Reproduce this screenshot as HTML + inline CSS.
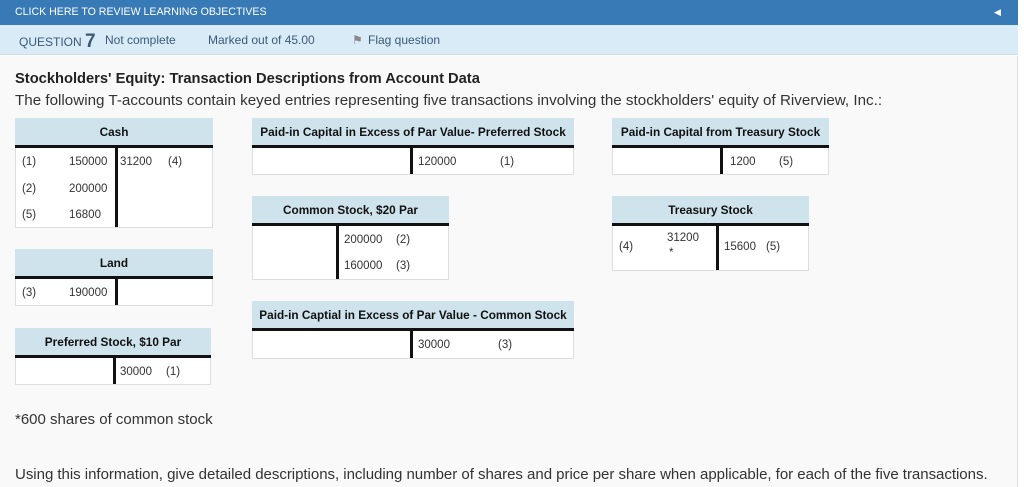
<!DOCTYPE html>
<html><head><meta charset="utf-8"><style>
*{margin:0;padding:0;box-sizing:border-box}
body{width:1024px;height:487px;overflow:hidden;background:#fff;font-family:"Liberation Sans",sans-serif;color:#333;position:relative}
.top{position:absolute;left:0;top:0;width:1018px;height:25px;background:#377ab5;color:#fff;font-size:10.6px;line-height:24px;padding-left:15px}
.bar{position:absolute;left:0;top:25px;width:1018px;height:30px;background:#d9ebf6;border-bottom:1px solid #cfdde6;font-size:12px;line-height:31px;color:#3a5a78}
.main{position:absolute;left:0;top:56px;width:1018px;height:431px;background:#f9f9f9;border-right:1px solid #ddd}
.a{position:absolute}
.h{position:absolute;left:0;top:0;right:0;background:#cfe3ec;font-weight:bold;font-size:11.8px;text-align:center;color:#111;border-bottom:3px solid #111}
.b{position:absolute;left:0;right:0;background:#fff;border:1px solid #ddd;border-top:none}
.d{position:absolute;top:0;bottom:0;width:3px;background:#111}
.t{position:absolute;font-size:11.5px;color:#333;white-space:nowrap}
</style></head><body>
<div class="top">CLICK HERE TO REVIEW LEARNING OBJECTIVES<span style="position:absolute;left:994px;top:0;font-size:9px">◀</span></div>
<div class="bar"><span style="position:absolute;left:19px">QUESTION <b style="font-size:19px;color:#3a5a78;position:relative;top:1px">7</b></span><span style="position:absolute;left:105px">Not complete</span><span style="position:absolute;left:208px">Marked out of 45.00</span><span style="position:absolute;left:352px;color:#888">⚑</span><span style="position:absolute;left:368px">Flag question</span></div>
<div class="main"></div>
<div class="t" style="left:15px;top:71px;font-size:14.7px;font-weight:bold;color:#222">Stockholders' Equity: Transaction Descriptions from Account Data</div>
<div class="t" style="left:15px;top:92px;font-size:15.2px;color:#333">The following T-accounts contain keyed entries representing five transactions involving the stockholders' equity of Riverview, Inc.:</div>

<div class="a" style="left:15px;top:118px;width:198px;height:110px">
<div class="h" style="height:30px;line-height:29px">Cash</div>
<div class="b" style="top:30px;bottom:0"><div class="d" style="left:99px"></div>
<span class="t" style="left:6px;top:8px">(1)</span><span class="t" style="left:53px;top:8px">150000</span><span class="t" style="left:104px;top:8px">31200</span><span class="t" style="left:152px;top:8px">(4)</span>
<span class="t" style="left:6px;top:35px">(2)</span><span class="t" style="left:53px;top:35px">200000</span>
<span class="t" style="left:6px;top:61px">(5)</span><span class="t" style="left:53px;top:61px">16800</span></div></div>

<div class="a" style="left:252px;top:118px;width:322px;height:57px">
<div class="h" style="height:30px;line-height:29px">Paid-in Capital in Excess of Par Value- Preferred Stock</div>
<div class="b" style="top:30px;bottom:0"><div class="d" style="left:157px"></div>
<span class="t" style="left:165px;top:8px">120000</span><span class="t" style="left:247px;top:8px">(1)</span></div></div>

<div class="a" style="left:612px;top:118px;width:217px;height:57px">
<div class="h" style="height:30px;line-height:29px">Paid-in Capital from Treasury Stock</div>
<div class="b" style="top:30px;bottom:0"><div class="d" style="left:107px"></div>
<span class="t" style="left:117px;top:8px">1200</span><span class="t" style="left:166px;top:8px">(5)</span></div></div>

<div class="a" style="left:252px;top:196px;width:197px;height:84px">
<div class="h" style="height:30px;line-height:29px">Common Stock, $20 Par</div>
<div class="b" style="top:30px;bottom:0"><div class="d" style="left:83px"></div>
<span class="t" style="left:91px;top:8px">200000</span><span class="t" style="left:143px;top:8px">(2)</span>
<span class="t" style="left:91px;top:34px">160000</span><span class="t" style="left:143px;top:34px">(3)</span></div></div>

<div class="a" style="left:612px;top:196px;width:197px;height:75px">
<div class="h" style="height:30px;line-height:29px">Treasury Stock</div>
<div class="b" style="top:30px;bottom:0"><div class="d" style="left:103px"></div>
<span class="t" style="left:6px;top:15px">(4)</span><span class="t" style="left:54px;top:6px">31200</span><span class="t" style="left:56px;top:21px">*</span>
<span class="t" style="left:111px;top:15px">15600</span><span class="t" style="left:153px;top:15px">(5)</span></div></div>

<div class="a" style="left:15px;top:249px;width:198px;height:57px">
<div class="h" style="height:30px;line-height:29px">Land</div>
<div class="b" style="top:30px;bottom:0"><div class="d" style="left:99px"></div>
<span class="t" style="left:6px;top:8px">(3)</span><span class="t" style="left:53px;top:8px">190000</span></div></div>

<div class="a" style="left:252px;top:301px;width:322px;height:58px">
<div class="h" style="height:30px;line-height:29px">Paid-in Captial in Excess of Par Value - Common Stock</div>
<div class="b" style="top:30px;bottom:0"><div class="d" style="left:157px"></div>
<span class="t" style="left:165px;top:8px">30000</span><span class="t" style="left:245px;top:8px">(3)</span></div></div>

<div class="a" style="left:15px;top:328px;width:196px;height:57px">
<div class="h" style="height:30px;line-height:29px">Preferred Stock, $10 Par</div>
<div class="b" style="top:30px;bottom:0"><div class="d" style="left:97px"></div>
<span class="t" style="left:104px;top:8px">30000</span><span class="t" style="left:150px;top:8px">(1)</span></div></div>

<div class="t" style="left:15px;top:411px;font-size:15px">*600 shares of common stock</div>
<div class="t" style="left:15px;top:466px;font-size:15.05px;letter-spacing:-0.04px">Using this information, give detailed descriptions, including number of shares and price per share when applicable, for each of the five transactions.</div>
</body></html>
